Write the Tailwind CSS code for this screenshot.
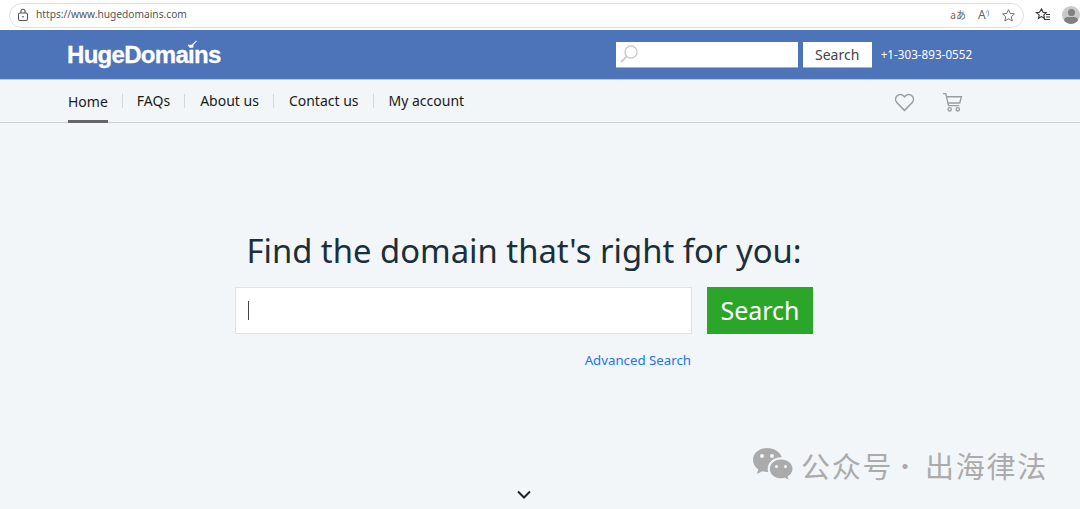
<!DOCTYPE html>
<html lang="en">
<head>
  <meta charset="UTF-8" />
  <title>HugeDomains</title>
  <script src="https://cdn.jsdelivr.net/npm/@tailwindcss/browser@4"></script>
</head>
<body class="relative h-[509px] w-[1080px] overflow-hidden bg-[#f2f6f9] font-['Noto_Sans',sans-serif]">
  <!-- browser toolbar -->
  <div class="flex h-[30px] items-center bg-white pl-[9px]">
    <div class="flex h-[25px] w-[1015px] shrink-0 items-center rounded-full border border-[#e0e0e0] pl-[6px] pr-[7px]">
      <svg class="h-[14px] w-[14px] text-[#555]" viewBox="0 0 14 14" fill="none" stroke="currentColor" stroke-width="1.1">
        <rect x="2.500" y="5" width="9" height="7.500" rx="1.500" />
        <path d="M5 5V3.200a2 2 0 0 1 4 0V5" />
        <path d="M6 8.700h2" />
      </svg>
      <span class="ml-[6px] text-[10.2px] text-[#555]">https://www.hugedomains.com</span>
      <div class="ml-auto flex items-center text-[#666]">
        <span class="font-['Noto_Sans','Noto_Sans_CJK_JP',sans-serif] text-[10px] leading-none">aあ</span>
        <span class="ml-[12px] flex items-start text-[12px] leading-none">A<span class="text-[7px]">ᵎ)</span></span>
        <svg class="ml-[12px] h-[15px] w-[15px]" viewBox="0 0 16 16" fill="none" stroke="currentColor" stroke-width="1">
          <path d="M8 1.800l1.900 4 4.400.5-3.300 3 .9 4.400L8 11.500l-3.900 2.200.9-4.400-3.300-3 4.400-.5z" />
        </svg>
      </div>
    </div>
    <svg class="ml-[11px] h-[16px] w-[16px] shrink-0 text-[#333]" viewBox="0 0 16 16" fill="none" stroke="currentColor" stroke-width="1.100">
      <path d="M6.500 2l1.500 3.200 3.300.4-2.500 2.300.7 3.400-3-1.700-3 1.700.7-3.400L1.200 5.600l3.300-.4z" />
      <path d="M11 7.500h4M11 10h4M9 12.500h6" />
    </svg>
    <div class="ml-[11px] h-[18px] w-[18px] shrink-0 overflow-hidden rounded-full bg-[#c9c9c9]">
      <div class="mx-auto mt-[3px] h-[7px] w-[7px] rounded-full bg-[#808080]"></div>
      <div class="mx-auto mt-[1px] h-[8px] w-[14px] rounded-full bg-[#808080]"></div>
    </div>
  </div>

  <!-- blue header -->
  <header class="flex h-[50px] items-center border-b border-[#b7c7e2] bg-[#4d73b8] pl-[67px]">
    <div class="relative font-['Liberation_Sans',sans-serif] text-[24px] font-bold leading-none tracking-[-0.7px] text-white [-webkit-text-stroke:0.3px_white]">
      HugeDomains
      <svg class="absolute left-[120px] top-[-3px] h-[9px] w-[11px]" viewBox="0 0 12 10" fill="none" stroke="#fff" stroke-width="1.300">
        <path d="M1 5.500l2.500 2.500L10.500 1" />
      </svg>
    </div>
    <div class="ml-[395px] flex h-[26px] w-[182px] items-center border-b border-[#9db0d3] bg-white pl-[3px]">
      <svg class="h-[20px] w-[20px] text-[#ccc]" viewBox="0 0 20 20" fill="none" stroke="currentColor">
        <circle cx="12" cy="8" r="6" stroke-width="1.500" />
        <path d="M7.500 12.500L2 18" stroke-width="2" />
      </svg>
    </div>
    <button class="ml-[5px] h-[26px] w-[69px] border-b border-[#9db0d3] bg-white text-[14px] text-[#444]">Search</button>
    <span class="ml-[9px] text-[11.7px] text-white">+1-303-893-0552</span>
  </header>

  <!-- nav -->
  <nav class="flex h-[43px] items-center border-b border-[#cdd1d6] pl-[68px] text-[14px] text-[#1a1a1a]">
    <a class="relative flex h-full items-center pr-[14px]">
      Home
      <span class="absolute bottom-[-1px] left-0 h-[3px] w-[40px] bg-[#666]"></span>
    </a>
    <a class="border-l border-[#d5d8dc] pl-[14px] pr-[14px] leading-[14px]">FAQs</a>
    <a class="border-l border-[#d5d8dc] pl-[15px] pr-[14px] leading-[14px]">About us</a>
    <a class="border-l border-[#d5d8dc] pl-[15px] pr-[14px] leading-[14px]">Contact us</a>
    <a class="border-l border-[#d5d8dc] pl-[15px] leading-[14px]">My account</a>
    <div class="ml-auto mr-[117px] mt-[2px] flex items-center gap-[27px] text-[#9a9da1]">
      <svg class="h-[21px] w-[21px]" viewBox="0 0 20 20" fill="none" stroke="currentColor" stroke-width="1.500">
        <path d="M10 17.500L2.800 10.200a4.600 4.600 0 0 1 0-6.400 4.500 4.500 0 0 1 6.400 0l.8.8.8-.8a4.500 4.500 0 0 1 6.400 0 4.600 4.600 0 0 1 0 6.400z" />
      </svg>
      <svg class="h-[21px] w-[21px]" viewBox="0 0 20 20" fill="none" stroke="currentColor" stroke-width="1.300">
        <path d="M1 1.500h2.600l2.600 11.500h10.200" />
        <path d="M4.200 4.500h14.300l-1.600 6H5.600" />
        <circle cx="7.300" cy="16.500" r="1.600" />
        <circle cx="15" cy="16.500" r="1.600" />
      </svg>
    </div>
  </nav>

  <!-- domain search -->
  <main class="ml-[235px] w-[578px] pt-[105px]">
    <h1 class="text-center text-[32.8px] leading-[46px] text-[#1b2f3a]">Find the domain that's right for you:</h1>
    <div class="mt-[13px] flex justify-between">
      <div class="flex h-[47px] w-[457px] items-center border border-[#dfe3e8] bg-white pl-[12px]">
        <span class="h-[19px] w-px bg-[#444]"></span>
      </div>
      <button class="h-[47px] w-[106px] bg-[#2ca62a] text-[25px] text-white">Search</button>
    </div>
    <a class="mt-[16px] block w-[456px] text-right text-[13.25px] leading-[20px] text-[#1a73f0]">Advanced Search</a>
  </main>

  <svg class="absolute left-[517px] top-[490px] h-[9px] w-[14px] text-[#222]" viewBox="0 0 14 9" fill="none" stroke="currentColor" stroke-width="2">
    <path d="M1 1.500l6 6 6-6" />
  </svg>

  <!-- watermark -->
  <div class="absolute left-[752px] top-[447px] flex items-center font-['Noto_Sans_CJK_SC',sans-serif] text-[29px] leading-[36px] tracking-[1.7px] text-[#ababab]">
    <svg class="h-[36px] w-[42px]" viewBox="0 0 42 36">
      <path fill="currentColor" d="M15 1C7 1 1 6.300 1 13c0 3.800 2 7 5.200 9.300L5 27l5.300-2.700c1.600.5 3.100.8 4.700.8h1.200a11 11 0 0 1-.5-3.200c0-6.500 5.800-11.700 13-11.700h1C28.200 5 22.200 1 15 1z" />
      <path fill="currentColor" d="M29 12c-6.400 0-11.600 4.400-11.600 9.900S22.600 31.800 29 31.800c1.300 0 2.600-.2 3.800-.6l4.200 2.300-1-3.800c3-1.900 5-4.800 5-7.800C41 16.400 35.400 12 29 12z" stroke="#f2f6f9" stroke-width="1" />
      <circle cx="10" cy="9" r="2" fill="#f2f6f9" />
      <circle cx="20" cy="9" r="2" fill="#f2f6f9" />
      <circle cx="24.500" cy="19.500" r="1.600" fill="#f2f6f9" />
      <circle cx="33.500" cy="19.500" r="1.600" fill="#f2f6f9" />
    </svg>
    <span class="ml-[7px]">公众号</span>
    <span class="w-[32px] pr-[10px] text-center text-[24px]">·</span>
    <span>出海律法</span>
  </div>
</body>
</html>
